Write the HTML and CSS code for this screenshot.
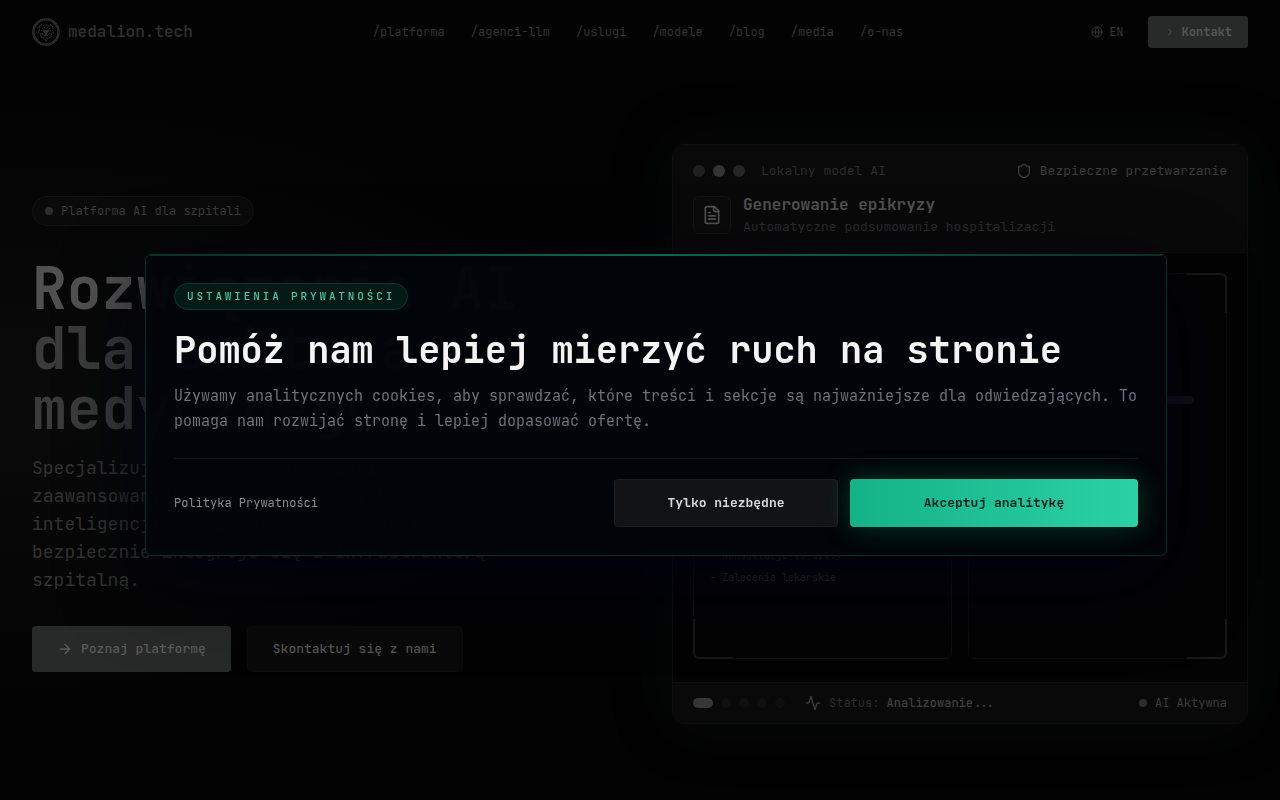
FILE: index.html
```html
<!DOCTYPE html>
<html lang="pl">
  <head>
    <meta charset="utf-8">
    <title>medalion.tech</title>
    <link rel="stylesheet" href="styles.css">
  </head>

  <body>
    <header class="navbar">
      <a class="brand" href="#">
        <svg class="brand-logo" viewBox="0 0 28 28" fill="none" stroke="currentColor">
          <circle cx="14" cy="14" r="12.6" stroke-width="2.4" />
          <circle cx="14" cy="14" r="12.6" stroke="#0c0c0c" stroke-width="0.8" stroke-dasharray="1 1" />
          <path d="M7 9l2.500-2 2 1 2.500-1.500 2.500 1.500 2-1L21 9l-.5 3 1 2-2 2-.5 3-2.500 1-2.500 3-2.500-3-2.500-1-.5-3-2-2 1-2z" stroke-width="1.2" stroke-dasharray="1.400 .8" />
          <path d="M10 10l2 1.500M18 10l-2 1.500M10 15l1.500 2M18 15l-1.500 2M12 9l1 1.500M16 9l-1 1.500M12.500 19l1.500 1.500 1.500-1.500M9 12l1 1M19 12l-1 1M12 17.500h4" stroke-width="0.9" />
          <path d="M11 12h2l1 1 1-1h2l-1 2-1 1v2h-2v-2l-1-1z" fill="currentColor" stroke-width="0.6" />
        </svg>
        <span>medalion.tech</span>
      </a>
      <nav class="nav-links">
        <a href="#">/platforma</a>
        <a href="#">/agenci-llm</a>
        <a href="#">/uslugi</a>
        <a href="#">/modele</a>
        <a href="#">/blog</a>
        <a href="#">/media</a>
        <a href="#">/o-nas</a>
      </nav>
      <div class="nav-actions">
        <button class="lang" type="button">
          <svg class="icon-12" viewBox="0 0 24 24"><circle cx="12" cy="12" r="10" /><path d="M12 2a14.500 14.500 0 0 0 0 20 14.500 14.500 0 0 0 0-20M2 12h20" /></svg>
          EN
        </button>
        <button class="contact" type="button">
          <svg class="icon-12" viewBox="0 0 24 24"><path d="m9 18 6-6-6-6" /></svg>
          Kontakt
        </button>
      </div>
    </header>

    <main class="hero">
      <section class="intro">
        <span class="tag"><i class="dot"></i>Platforma AI dla szpitali</span>
        <h1><span>Rozwiązania AI</span><br>dla sektora<br>medycznego</h1>
        <p class="lead">
          Specjalizujemy się w dostarczaniu zaawansowanych rozwiązań opartych na
          sztucznej inteligencji. Nasza platforma Medalion bezpiecznie integruje
          się z infrastrukturą szpitalną.
        </p>
        <div class="actions">
          <button class="btn btn-main" type="button">
            <svg class="icon-16" viewBox="0 0 24 24"><path d="M5 12h14M12 5l7 7-7 7" /></svg>
            Poznaj platformę
          </button>
          <button class="btn btn-ghost" type="button">Skontaktuj się z nami</button>
        </div>
      </section>

      <section class="card">
        <div class="card-head">
          <div class="card-bar">
            <i class="light"></i><i class="light light-mid"></i><i class="light light-last"></i>
            <span class="card-model">Lokalny model AI</span>
            <span class="card-safe">
              <svg class="icon-16" viewBox="0 0 24 24"><path d="M20 13c0 5-3.500 7.500-7.700 9a1 1 0 0 1-.6 0C7.500 20.500 4 18 4 13V6a1 1 0 0 1 1-1c2 0 4.500-1.200 6.200-2.700a1.200 1.200 0 0 1 1.600 0C14.500 3.800 17 5 19 5a1 1 0 0 1 1 1z" /></svg>
              Bezpieczne przetwarzanie
            </span>
          </div>
          <div class="card-title">
            <div class="card-icon">
              <svg class="icon-20" viewBox="0 0 24 24"><path d="M15 2H6a2 2 0 0 0-2 2v16a2 2 0 0 0 2 2h12a2 2 0 0 0 2-2V7zM14 2v4a2 2 0 0 0 2 2h4M10 9H8M16 13H8M16 17H8" /></svg>
            </div>
            <div>
              <h2>Generowanie epikryzy</h2>
              <p>Automatyczne podsumowanie hospitalizacji</p>
            </div>
          </div>
        </div>

        <div class="card-body">
          <div class="panel panel-docs">
            <ul>
              <li>- Konsultacje (3 szt.)</li>
              <li>- Zalecenia lekarskie</li>
            </ul>
          </div>
          <div class="panel panel-result">
            <div class="progress"></div>
          </div>
          <i class="corner corner-tr"></i>
          <i class="corner corner-bl"></i>
          <i class="corner corner-br"></i>
        </div>

        <div class="card-foot">
          <div class="steps"><i class="active"></i><i></i><i></i><i></i><i></i></div>
          <svg class="icon-16" viewBox="0 0 24 24"><path d="M22 12h-2.500a2 2 0 0 0-1.900 1.500l-2.400 8.300a.25.25 0 0 1-.5 0L9.200 2.200a.25.25 0 0 0-.5 0l-2.300 8.300A2 2 0 0 1 4.500 12H2" /></svg>
          <span class="status">Status: <b>Analizowanie...</b></span>
          <span class="online"><i class="dot"></i>AI Aktywna</span>
        </div>
      </section>
    </main>

    <div class="overlay">
      <div class="consent" role="dialog" aria-labelledby="consentTitle">
        <span class="consent-tag">USTAWIENIA PRYWATNOŚCI</span>
        <h2 id="consentTitle">Pomóż nam lepiej mierzyć ruch na stronie</h2>
        <p>
          Używamy analitycznych cookies, aby sprawdzać, które treści i sekcje są
          najważniejsze dla odwiedzających. To pomaga nam rozwijać stronę i
          lepiej dopasować ofertę.
        </p>
        <div class="consent-foot">
          <a href="#">Polityka Prywatności</a>
          <button class="consent-btn" type="button">Tylko niezbędne</button>
          <button class="consent-btn accept" type="button">Akceptuj analitykę</button>
        </div>
      </div>
    </div>
  </body>
</html>
```

FILE: styles.css
```css
* {
  box-sizing: border-box;
}

body {
  margin: 0;
  min-height: 100vh;
  background: radial-gradient(ellipse 640px 300px at 0 400px, #090a09, #030303);
  color: #333433;
  font-family: "JetBrains Mono", "DejaVu Sans Mono", "Liberation Mono", monospace;
  font-size: 13px;
  line-height: 20px;
}

h1,
h2,
p,
ul {
  margin: 0;
  padding: 0;
}

a {
  color: inherit;
  text-decoration: none;
}

button {
  font: inherit;
  cursor: pointer;
}

svg {
  flex: none;
}

.icon-12,
.icon-16,
.icon-20 {
  width: 16px;
  height: 16px;
  fill: none;
  stroke: currentColor;
  stroke-width: 2;
  stroke-linecap: round;
  stroke-linejoin: round;
}

.icon-12 {
  width: 12px;
  height: 12px;
}

.icon-20 {
  width: 20px;
  height: 20px;
}

/* navbar */
.navbar {
  display: flex;
  justify-content: space-between;
  align-items: center;
  height: 64px;
  padding: 0 32px;
  background: #030303;
  font-size: 12px;
}

.brand {
  display: flex;
  align-items: center;
  gap: 8px;
  color: #303231;
  font-size: 16px;
  font-weight: 500;
}

.brand-logo {
  width: 28px;
  height: 28px;
}

.nav-links {
  display: flex;
  gap: 26px;
}

.nav-actions {
  display: flex;
  align-items: center;
  gap: 16px;
}

.lang,
.contact {
  display: flex;
  align-items: center;
  border: 0;
}

.lang {
  gap: 6px;
  padding: 6px 8px;
  background: none;
  color: #333433;
}

.contact {
  gap: 6px;
  height: 32px;
  padding: 0 16px;
  border-radius: 4px;
  background: #282a29;
  color: #555655;
  font-weight: bold;
}

/* hero */
.hero {
  display: grid;
  grid-template-columns: 1fr 1fr;
  gap: 64px;
  align-items: center;
  padding: 80px 32px 76px;
}

.dot {
  width: 8px;
  height: 8px;
  border-radius: 50%;
  background: #2c2e2d;
}

.tag {
  display: inline-flex;
  align-items: center;
  gap: 8px;
  height: 30px;
  padding: 0 12px;
  border: 1px solid #121413;
  border-radius: 15px;
  background: #090a09;
  color: #3a3c3b;
  font-size: 12px;
  vertical-align: top;
}

.intro h1 {
  margin-top: 32px;
  color: #3a3b3a;
  font-size: 58px;
  line-height: 60px;
}

.intro h1 span {
  color: #515151;
}

.lead {
  max-width: 512px;
  margin-top: 16px;
  font-size: 18px;
  line-height: 28px;
}

.actions {
  display: flex;
  gap: 16px;
  margin-top: 32px;
}

.btn {
  display: flex;
  align-items: center;
  gap: 8px;
  height: 46px;
  padding: 0 25px;
  border: 0;
  border-radius: 4px;
  font-weight: 500;
}

.btn-main {
  background: #282a29;
  color: #5a5b5a;
}

.btn-ghost {
  border: 1px solid #0c0c0c;
  background: #090909;
  color: #555655;
}

/* product card */
.card {
  overflow: hidden;
  border: 1px solid #0d0f0e;
  border-radius: 12px;
  background: #030303;
  box-shadow: 0 0 60px rgba(14, 24, 20, 0.3);
}

.card-head {
  padding: 16px 20px 15px;
  border-bottom: 1px solid #0e0e0e;
  background: #090909;
}

.card-bar {
  display: flex;
  align-items: center;
  gap: 8px;
}

.light {
  width: 12px;
  height: 12px;
  border-radius: 50%;
  background: #1f1f1f;
}

.light-mid {
  background: #353433;
}

.light-last {
  background: #252726;
}

.card-model {
  margin-left: 8px;
  color: #2c2c2c;
}

.card-safe {
  display: flex;
  align-items: center;
  gap: 8px;
  margin-left: auto;
  color: #3a3c3b;
}

.card-title {
  display: flex;
  align-items: center;
  gap: 12px;
  margin-top: 12px;
}

.card-icon {
  display: flex;
  justify-content: center;
  align-items: center;
  width: 38px;
  height: 38px;
  border: 1px solid #151515;
  border-radius: 6px;
  background: #0b0b0b;
  color: #505150;
}

.card-title h2 {
  color: #515151;
  font-size: 16px;
  line-height: 24px;
}

.card-title p {
  color: #2c2c2c;
}

.card-body {
  position: relative;
  display: grid;
  grid-template-columns: 1fr 1fr;
  gap: 16px;
  margin: 20px 20px 23px;
}

.panel {
  min-height: 386px;
  border: 1px solid #0c0c0c;
  border-radius: 6px;
  background: #040404;
}

.panel-docs {
  display: flex;
  align-items: flex-end;
  padding: 0 16px 69px;
  border-color: #101010;
  color: #343436;
  font-size: 10px;
  line-height: 22px;
}

.panel-docs ul {
  list-style: none;
}

.panel-result {
  padding: 122px 32px;
}

.progress {
  height: 8px;
  border-radius: 4px;
  background: #121216;
}

.corner {
  position: absolute;
  width: 40px;
  height: 40px;
  border: 0 solid #181918;
}

.corner-tr {
  top: 0;
  right: 0;
  border-width: 2px 2px 0 0;
  border-radius: 0 6px 0 0;
}

.corner-bl {
  bottom: 0;
  left: 0;
  border-width: 0 0 2px 2px;
  border-radius: 0 0 0 6px;
}

.corner-br {
  right: 0;
  bottom: 0;
  border-width: 0 2px 2px 0;
  border-radius: 0 0 6px 0;
}

.card-foot {
  display: flex;
  align-items: center;
  gap: 8px;
  height: 41px;
  padding: 0 20px;
  border-top: 1px solid #0e0e0e;
  background: #090909;
  color: #3a3c3b;
  font-size: 12px;
}

.steps {
  display: flex;
  gap: 8px;
  margin-right: 12px;
}

.steps i {
  width: 10px;
  height: 10px;
  border-radius: 5px;
  background: #0f0f0f;
}

.steps .active {
  width: 20px;
  background: #353736;
}

.status {
  color: #2c2c2c;
}

.status b {
  color: #3e403f;
  font-weight: 500;
}

.online {
  display: flex;
  align-items: center;
  gap: 8px;
  margin-left: auto;
}

/* cookie consent */
.overlay {
  position: fixed;
  inset: 0;
  display: flex;
  justify-content: center;
  align-items: center;
  padding: 9px 0 0 32px;
}

.consent {
  position: relative;
  width: 82%;
  max-width: 1022px;
  padding: 28px;
  border: 1px solid #06302a;
  border-radius: 6px;
  background: rgba(1, 4, 8, 0.97);
  box-shadow: 0 24px 80px rgba(1, 1, 16, 0.9);
}

.consent::before {
  content: "";
  position: absolute;
  top: -1px;
  left: 4px;
  right: 4px;
  height: 2px;
  background: linear-gradient(90deg, #06302a, #0f6650, #06302a);
}

.consent-tag {
  display: inline-block;
  height: 27px;
  padding: 0 12px;
  border: 1px solid #063a2d;
  border-radius: 14px;
  background: #041a17;
  color: #4fc6a0;
  font-size: 11px;
  font-weight: 500;
  line-height: 25px;
  letter-spacing: 0.26em;
  vertical-align: top;
}

.consent h2 {
  margin-top: 19px;
  color: #f4f4f5;
  font-size: 37px;
  font-weight: 600;
  line-height: 42px;
}

.consent p {
  margin-top: 13px;
  color: #71717a;
  font-size: 15px;
  line-height: 25px;
}

.consent-foot {
  display: flex;
  align-items: center;
  gap: 12px;
  margin-top: 24px;
  padding-top: 20px;
  border-top: 1px solid #121519;
}

.consent-foot a {
  margin-right: auto;
  color: #8b8b92;
  font-size: 12px;
}

.consent-btn {
  height: 48px;
  min-width: 224px;
  border: 1px solid #1c1d21;
  border-radius: 4px;
  background: #121317;
  color: #d9d9dc;
  font-weight: 600;
}

.accept {
  min-width: 288px;
  border: 0;
  background: linear-gradient(90deg, #14b287, #2bd1a5);
  box-shadow: 0 0 28px rgba(16, 185, 129, 0.3);
  color: #04201c;
}
```
